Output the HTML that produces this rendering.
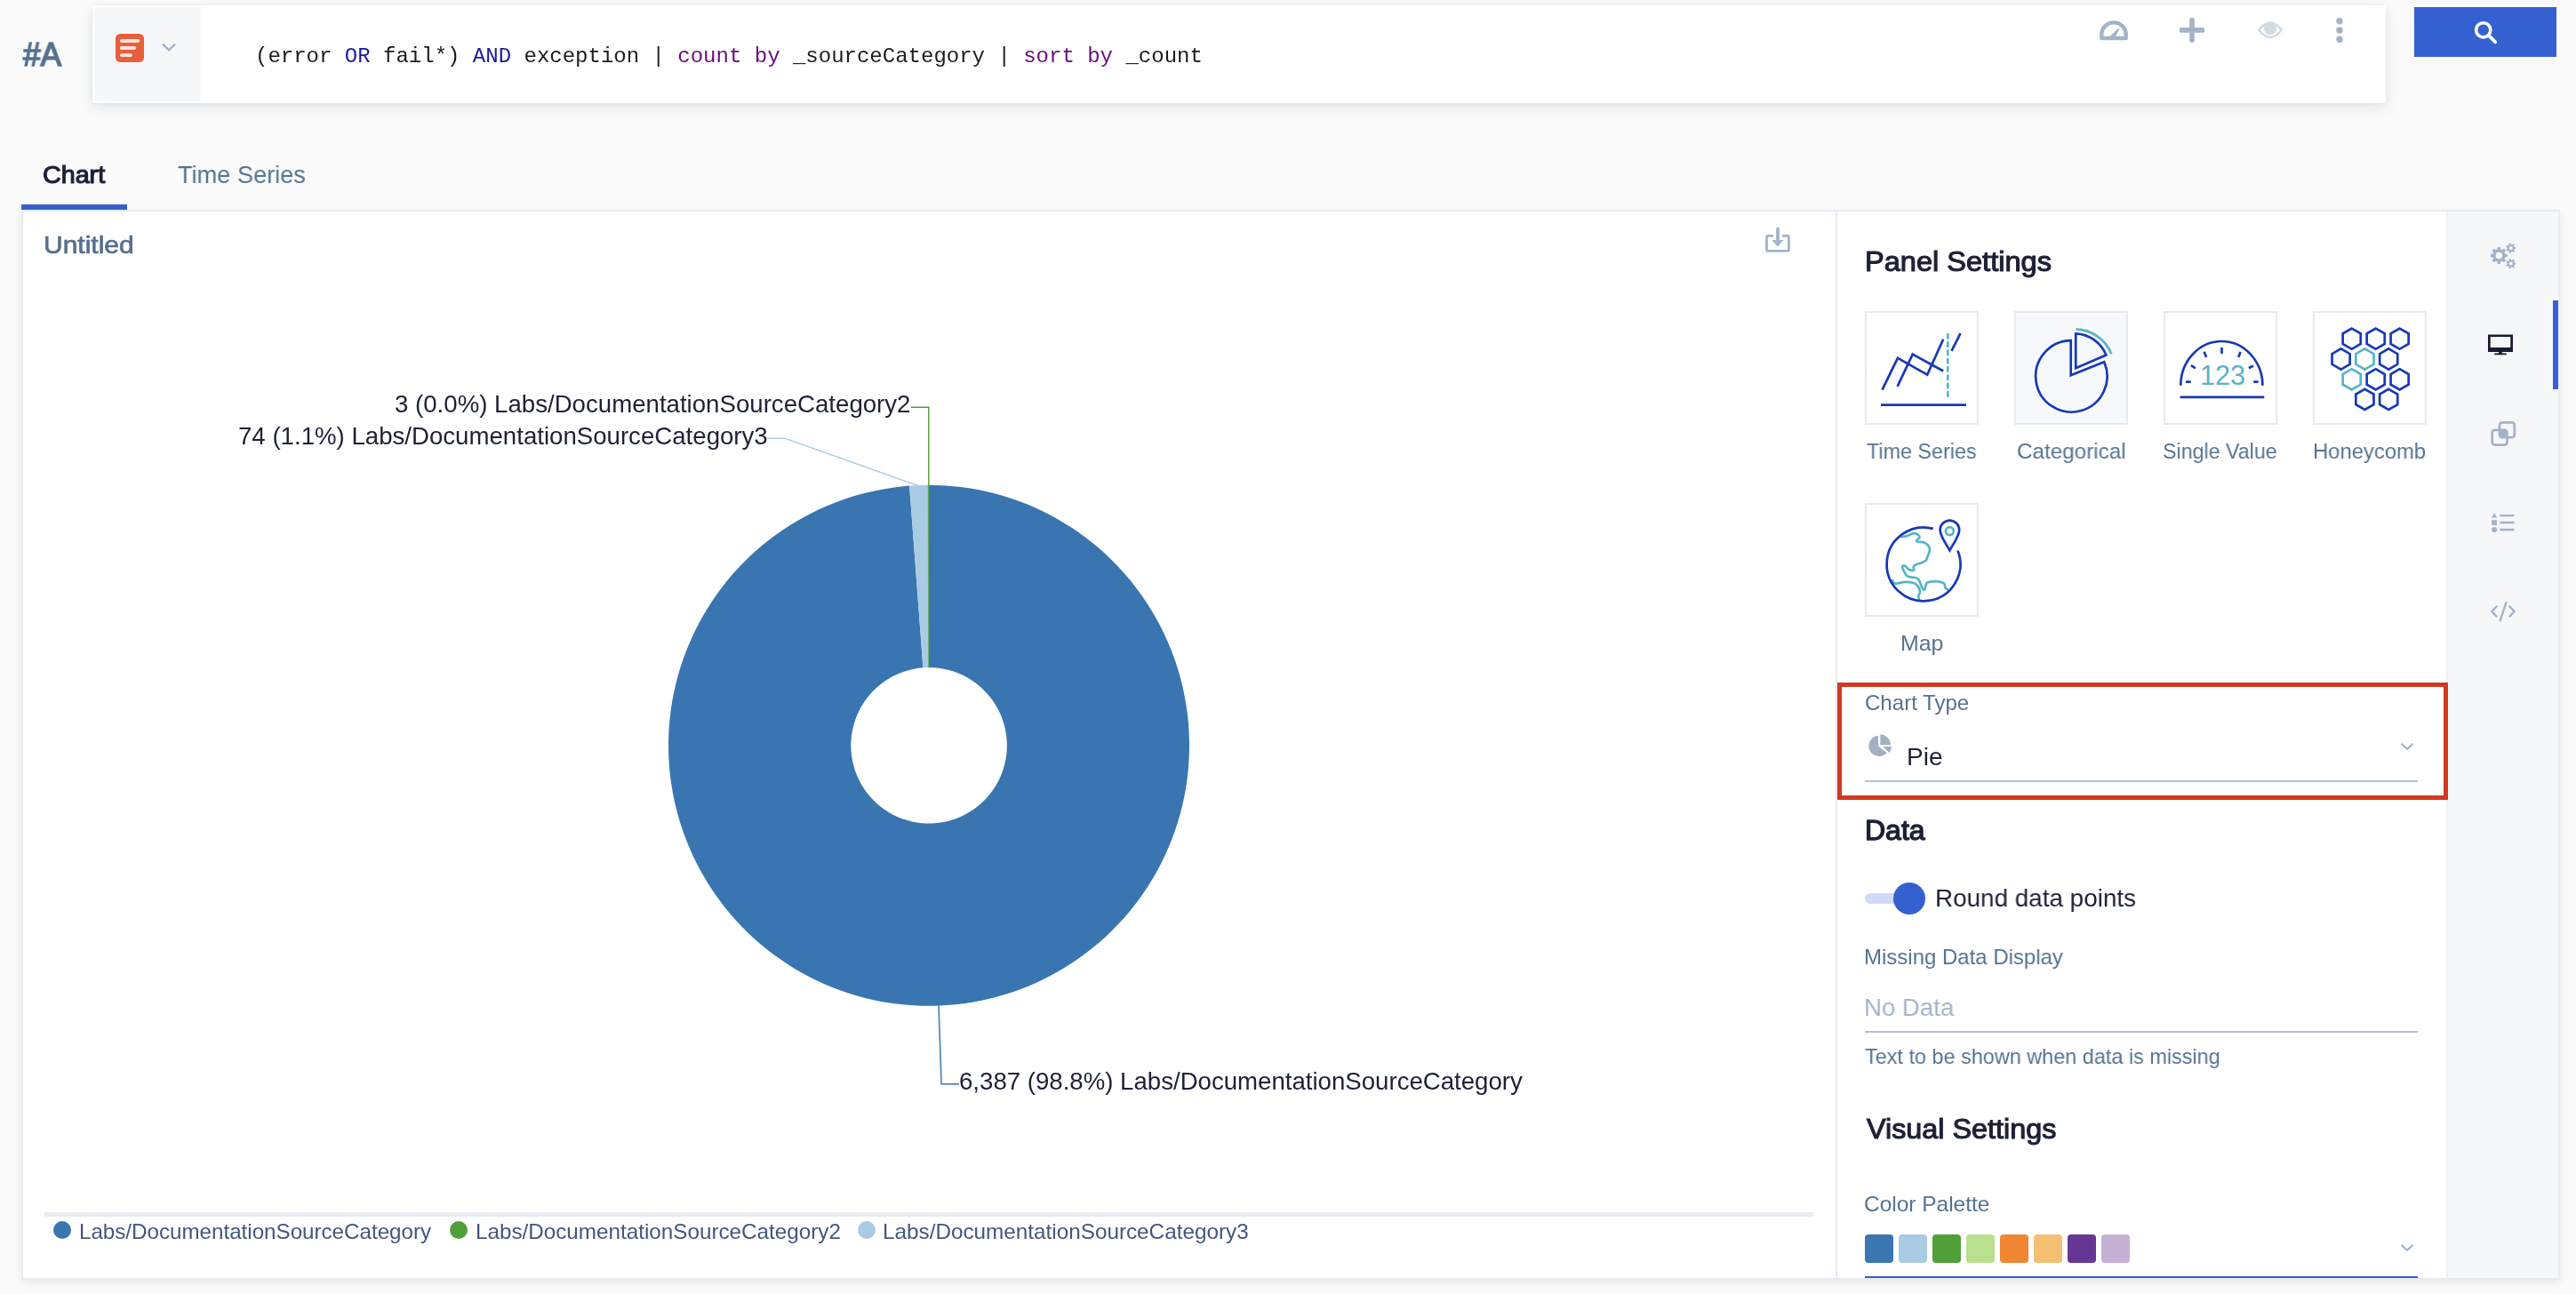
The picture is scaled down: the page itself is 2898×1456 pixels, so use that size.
<!DOCTYPE html>
<html lang="en">
<head>
<meta charset="utf-8">
<title>Panel Settings - Chart Type</title>
<style>
html,body{margin:0;padding:0}
body{width:2898px;height:1456px;overflow:hidden;background:#fafafa;position:relative;font-family:'Liberation Sans',sans-serif}
.abs{position:absolute}
.t{position:absolute;white-space:nowrap;transform-origin:0 0;display:block;will-change:transform}
#qbox{left:104px;top:6px;width:2580px;height:110px;background:#fff;box-shadow:0 5px 14px rgba(70,90,120,.13),0 0 3px rgba(70,90,120,.08)}
#qcell{left:106px;top:8px;width:120px;height:106px;background:#f6f7f9}
#query{will-change:transform;left:286.5px;top:47.6px;font:24px/32px 'Liberation Mono',monospace;color:#1b1b1d;white-space:pre}
#query .op{color:#1b1a9e}
#query .kw{color:#690a7c}
#sbtn{left:2716px;top:8px;width:160px;height:56px;background:#3561d0}
#tabline{left:24px;top:230px;width:119px;height:6px;background:#3561d0}
#panel{left:24px;top:236px;width:2856px;height:1204px;box-sizing:border-box;border:2px solid #e8ecf0;background:#fff;box-shadow:0 4px 9px rgba(60,70,90,.09)}
#ptop{display:none}
#settings{left:2065px;top:238px;width:688px;height:1200px;border-left:2px solid #e6eaef;box-sizing:border-box}
#side{left:2752px;top:238px;width:126px;height:1200px;background:#f6f7f9;border-left:2px solid #eef0f4;box-sizing:border-box}
#sidebar-active{left:2872px;top:338px;width:6px;height:100px;background:#3561d0}
.tile{position:absolute;width:128px;height:128px;box-sizing:border-box;border:2px solid #e6eaef;background:#fff}
.tile svg{position:absolute;left:-2px;top:-2px}
.uline{position:absolute;left:2098px;width:622px;height:2px;background:#b4c2d3}
.sw{position:absolute;top:1389px;width:32px;height:32px;border-radius:4px}
.dot{position:absolute;top:1374px;width:20px;height:20px;border-radius:50%}
#ovl{left:0;top:0;pointer-events:none}
</style>
</head>
<body>
<!-- header / query row -->
<div class="abs" id="qbox"></div>
<div class="abs" id="qcell"></div>
<div class="abs" id="query">(error <span class="op">OR</span> fail*) <span class="op">AND</span> exception | <span class="kw">count</span> <span class="kw">by</span> _sourceCategory | <span class="kw">sort</span> <span class="kw">by</span> _count</div>
<div class="abs" id="sbtn"></div>
<!-- tabs -->
<div class="abs" id="tabline"></div>
<!-- main panel -->
<div class="abs" id="panel"></div>
<div class="abs" id="ptop"></div>
<div class="abs" id="settings"></div>
<div class="abs" id="side"></div>
<div class="abs" id="sidebar-active"></div>

<!-- legend -->
<div class="abs" style="left:50px;top:1364px;width:1990px;height:5px;background:#e9edf1"></div>
<div class="dot" style="left:60px;background:#3976b1"></div>
<div class="dot" style="left:506px;background:#50a03a"></div>
<div class="dot" style="left:965px;background:#a9cbe3"></div>

<!-- viz type tiles -->
<div class="tile" style="left:2098px;top:350px">
<svg width="128" height="128" viewBox="0 0 128 128" fill="none" stroke="#1739b5" stroke-width="2.7">
<path d="M18,105.7H114"/>
<path d="M93.3,25V96.7" stroke="#56b5c6" stroke-dasharray="6.6 2.7"/>
<path d="M19.5,88.6L36.9,52.9L70.2,71.6L88.2,31.8"/>
<path d="M36.6,84.8L53.7,48.6L88.2,67.5"/>
<path d="M97.5,44.8L107.5,25.2"/>
</svg></div>
<div class="tile" style="left:2266px;top:350px;background:#f7f8fa">
<svg width="128" height="128" viewBox="0 0 128 128" fill="none" stroke="#1739b5" stroke-width="2.7">
<path d="M63.7,33.2V72.3L101.2,57.3A40.2,40.2 0 1 1 63.7,33.2Z" stroke-linejoin="miter"/>
<path d="M69.2,25.3V64.3L103.4,49.6A38.5,38.5 0 0 0 69.2,25.3Z"/>
<path d="M69.5,20.4A44.5,44.5 0 0 1 109.3,48.2" stroke="#56b5c6"/>
</svg></div>
<div class="tile" style="left:2434px;top:350px">
<svg width="128" height="128" viewBox="0 0 128 128" fill="none" stroke="#1739b5" stroke-width="2.7">
<path d="M18.6,96.9H113.3"/>
<path d="M19.3,83.8A46.05,49.8 0 0 1 111.4,83.8"/>
<path d="M65.5,41V48M45.6,45.7L48.1,51.9M86.6,46L84.1,51.9M30.9,61.2L35.9,64.3M100.9,61.5L95.9,64.3M25.1,79.6H30.7M101.2,79.6H106.7"/>
<text x="41" y="83.4" font-family="'Liberation Sans',sans-serif" font-size="31" fill="#56b5c6" stroke="none" textLength="51" lengthAdjust="spacingAndGlyphs">123</text>
</svg></div>
<div class="tile" style="left:2602px;top:350px">
<svg width="128" height="128" viewBox="0 0 128 128" fill="none" stroke-width="2.7"><polygon points="43.70,19.60 53.75,25.40 53.75,37.00 43.70,42.80 33.65,37.00 33.65,25.40" stroke="#1739b5"/><polygon points="70.70,19.60 80.75,25.40 80.75,37.00 70.70,42.80 60.65,37.00 60.65,25.40" stroke="#1739b5"/><polygon points="97.60,19.60 107.65,25.40 107.65,37.00 97.60,42.80 87.55,37.00 87.55,25.40" stroke="#1739b5"/><polygon points="31.60,42.40 41.65,48.20 41.65,59.80 31.60,65.60 21.55,59.80 21.55,48.20" stroke="#1739b5"/><polygon points="85.20,42.40 95.25,48.20 95.25,59.80 85.20,65.60 75.15,59.80 75.15,48.20" stroke="#1739b5"/><polygon points="70.70,65.20 80.75,71.00 80.75,82.60 70.70,88.40 60.65,82.60 60.65,71.00" stroke="#1739b5"/><polygon points="97.60,65.20 107.65,71.00 107.65,82.60 97.60,88.40 87.55,82.60 87.55,71.00" stroke="#1739b5"/><polygon points="58.40,87.80 68.45,93.60 68.45,105.20 58.40,111.00 48.35,105.20 48.35,93.60" stroke="#1739b5"/><polygon points="85.20,87.80 95.25,93.60 95.25,105.20 85.20,111.00 75.15,105.20 75.15,93.60" stroke="#1739b5"/><polygon points="58.40,42.40 68.45,48.20 68.45,59.80 58.40,65.60 48.35,59.80 48.35,48.20" stroke="#56b5c6"/><polygon points="43.70,65.20 53.75,71.00 53.75,82.60 43.70,88.40 33.65,82.60 33.65,71.00" stroke="#56b5c6"/></svg></div>
<div class="tile" style="left:2098px;top:566px">
<svg width="128" height="128" viewBox="0 0 128 128" fill="none" stroke="#1739b5" stroke-width="2.7" stroke-linecap="butt">
<path d="M40,37.9C44,38.5 47.5,37.3 51,35.5S58,33.5 60.9,36.8S56,41.5 58.6,43.1S63,43 66.1,44.3S72.5,48 73,51.8S70.5,58 69.6,62.8S60,67.5 56.2,69.8S56.5,75 55.1,75.6S52,75.8 49.9,75S46,70.2 44.1,70.4S41.5,71.5 42.3,73.3S45,80 47.5,82S52,83 55.1,83.7S58.5,84 60.3,86S64,96.5 66.1,97.6S68,90.5 70.1,89.5S79,88 82.3,88.3S88,89.5 89.3,90.7S89.5,94 90.4,95.3S92.5,97 93.9,97.6" stroke="#56b5c6"/>
<path d="M30.1,86C31.5,88.5 32.5,90.5 34.2,90.7S42,88.7 46.4,88.9S56,89.8 58,91.8S62,97.5 62,99.9S60.2,103 60.3,104.6S60.7,107.5 60.9,109.2" stroke="#56b5c6"/>
<path d="M76.8,28.9A41.4,41.4 0 1 0 104.4,53.4"/>
<path d="M95.4,53.3C91,45.5 84.6,36.5 84.6,30.4A10.8,10.8 0 0 1 106.2,30.4C106.2,36.5 99.8,45.5 95.4,53.3Z" stroke-linejoin="miter"/>
<circle cx="95.4" cy="31.6" r="4.5" stroke="#56b5c6"/>
</svg></div>

<!-- chart type row -->
<div class="uline" style="top:878px"></div>
<!-- toggle -->
<div class="abs" style="left:2098px;top:1005px;width:52px;height:12px;border-radius:6px;background:#cfdbf8"></div>
<div class="abs" style="left:2130px;top:993px;width:36px;height:36px;border-radius:50%;background:#3561d0"></div>
<div class="uline" style="top:1160px"></div>
<!-- palette -->
<div class="sw" style="left:2098px;background:#3a76b1"></div>
<div class="sw" style="left:2136px;background:#a9cbe3"></div>
<div class="sw" style="left:2174px;background:#50a03a"></div>
<div class="sw" style="left:2212px;background:#b9df8f"></div>
<div class="sw" style="left:2250px;background:#ee8632"></div>
<div class="sw" style="left:2288px;background:#f5c072"></div>
<div class="sw" style="left:2326px;background:#663795"></div>
<div class="sw" style="left:2364px;background:#c5b1d6"></div>
<div class="abs" style="left:2098px;top:1436px;width:622px;height:2px;background:#3561d0"></div>

<!-- all text -->
<span class="t" id="t_a" style="left:26.18px;top:44.00px;font-size:36px;line-height:36px;color:#557391;-webkit-text-stroke:1.6px #557391;transform:scaleX(0.9772)">#A</span>
<span class="t" id="t_tab1" style="left:47.88px;top:183.00px;font-size:28px;line-height:28px;color:#1d2135;-webkit-text-stroke:1.2px #1d2135;transform:scaleX(1.0244)">Chart</span>
<span class="t" id="t_tab2" style="left:199.76px;top:183.00px;font-size:28px;line-height:28px;color:#557391;transform:scaleX(0.9699)">Time Series</span>
<span class="t" id="t_title" style="left:49.08px;top:262.00px;font-size:28px;line-height:28px;color:#56708d;-webkit-text-stroke:0.7px #56708d;transform:scaleX(1.0705)">Untitled</span>
<span class="t" id="t_l1" style="left:444.17px;top:441.00px;font-size:27.6px;line-height:27.6px;color:#1d2135;transform:scaleX(1.0012)">3 (0.0%) Labs/DocumentationSourceCategory2</span>
<span class="t" id="t_l2" style="left:267.62px;top:477.00px;font-size:27.6px;line-height:27.6px;color:#1d2135;transform:scaleX(1.0010)">74 (1.1%) Labs/DocumentationSourceCategory3</span>
<span class="t" id="t_l3" style="left:1078.62px;top:1203.00px;font-size:27.6px;line-height:27.6px;color:#1d2135;transform:scaleX(1.0005)">6,387 (98.8%) Labs/DocumentationSourceCategory</span>
<span class="t" id="t_lg1" style="left:88.67px;top:1374.00px;font-size:24px;line-height:24px;color:#44567c;transform:scaleX(1.0063)">Labs/DocumentationSourceCategory</span>
<span class="t" id="t_lg2" style="left:534.76px;top:1374.00px;font-size:24px;line-height:24px;color:#44567c;transform:scaleX(1.0097)">Labs/DocumentationSourceCategory2</span>
<span class="t" id="t_lg3" style="left:993.06px;top:1374.00px;font-size:24px;line-height:24px;color:#44567c;transform:scaleX(1.0116)">Labs/DocumentationSourceCategory3</span>
<span class="t" id="t_ps" style="left:2097.87px;top:279.00px;font-size:31px;line-height:31px;color:#1d2135;-webkit-text-stroke:1.1px #1d2135;transform:scaleX(1.0501)">Panel Settings</span>
<span class="t" id="t_ts" style="left:2100.13px;top:496.00px;font-size:24.4px;line-height:24.4px;color:#557391;transform:scaleX(0.9560)">Time Series</span>
<span class="t" id="t_cat" style="left:2268.69px;top:496.00px;font-size:24.4px;line-height:24.4px;color:#557391;transform:scaleX(0.9935)">Categorical</span>
<span class="t" id="t_sv" style="left:2433.47px;top:496.00px;font-size:24.4px;line-height:24.4px;color:#557391;transform:scaleX(0.9524)">Single Value</span>
<span class="t" id="t_hc" style="left:2602.09px;top:496.00px;font-size:24.4px;line-height:24.4px;color:#557391;transform:scaleX(0.9767)">Honeycomb</span>
<span class="t" id="t_map" style="left:2137.51px;top:712.00px;font-size:24.4px;line-height:24.4px;color:#557391;transform:scaleX(1.0217)">Map</span>
<span class="t" id="t_ct" style="left:2097.60px;top:779.00px;font-size:24px;line-height:24px;color:#557391;transform:scaleX(1.0024)">Chart Type</span>
<span class="t" id="t_pie" style="left:2145.26px;top:838.00px;font-size:28px;line-height:28px;color:#1d2135;transform:scaleX(0.9996)">Pie</span>
<span class="t" id="t_data" style="left:2097.91px;top:919.00px;font-size:31px;line-height:31px;color:#1d2135;-webkit-text-stroke:1.3px #1d2135;transform:scaleX(1.0323)">Data</span>
<span class="t" id="t_round" style="left:2176.97px;top:997.00px;font-size:28px;line-height:28px;color:#1d2135;transform:scaleX(0.9942)">Round data points</span>
<span class="t" id="t_mdd" style="left:2097.18px;top:1065.00px;font-size:24px;line-height:24px;color:#557391;transform:scaleX(0.9989)">Missing Data Display</span>
<span class="t" id="t_nd" style="left:2097.09px;top:1120.00px;font-size:28px;line-height:28px;color:#a3b5ca;transform:scaleX(0.9852)">No Data</span>
<span class="t" id="t_help" style="left:2098.33px;top:1177.00px;font-size:24px;line-height:24px;color:#557391;transform:scaleX(0.9759)">Text to be shown when data is missing</span>
<span class="t" id="t_vs" style="left:2099.67px;top:1255.00px;font-size:31px;line-height:31px;color:#1d2135;-webkit-text-stroke:1.1px #1d2135;transform:scaleX(1.0432)">Visual Settings</span>
<span class="t" id="t_cp" style="left:2097.48px;top:1343.00px;font-size:24px;line-height:24px;color:#557391;transform:scaleX(1.0192)">Color Palette</span>

<!-- overlay svg: chart + icons in page coordinates -->
<svg class="abs" id="ovl" width="2898" height="1456" viewBox="0 0 2898 1456">
<path d="M1045.00,545.80A293,293 0 1 1 1023.09,546.62L1038.44,751.30A87.75,87.75 0 1 0 1045.00,751.05Z" fill="#3976b1"/>
<path d="M1023.09,546.62A293,293 0 0 1 1044.15,545.80L1044.74,751.05A87.75,87.75 0 0 0 1038.44,751.30Z" fill="#a9cbe3"/>
<path d="M1044.15,545.80A293,293 0 0 1 1045.00,545.80L1045.00,751.05A87.75,87.75 0 0 0 1044.74,751.05Z" fill="#50a03a" stroke="#50a03a" stroke-width="0.5"/>
<path d="M1024.8,458.2H1044.8V547" fill="none" stroke="#50a03a" stroke-width="1.4"/>
<path d="M863,493.2H883L1033,546.5" fill="none" stroke="#a9cbe3" stroke-width="1.4"/>
<path d="M1056,1131L1059.1,1219.8H1079" fill="none" stroke="#3976b1" stroke-width="1.5"/>
<!-- red highlight -->
<rect x="2069.5" y="770.5" width="682" height="127" fill="none" stroke="#d1391f" stroke-width="5"/>
<!-- orange log icon -->
<rect x="130" y="38" width="32" height="32" rx="5.5" fill="#e8603b"/>
<path d="M136.8,46H155.4M136.8,54H151.2M136.8,62.1H147" stroke="#fbe4dd" stroke-width="3.8" stroke-linecap="round" fill="none"/>
<path d="M183,49.6L190,56.4L197,49.6" stroke="#a3b3c8" stroke-width="2.2" fill="none"/>
<!-- query action icons -->
<g fill="none" stroke="#a3b3c8">
<path d="M2364.3,43V39A13.7,13.7 0 0 1 2391.7,39V43Z" stroke-width="4.4" stroke-linejoin="round"/>
<path d="M2374,41.5L2383.5,32.5L2379,41.5Z" fill="#a3b3c8" stroke-width="1.5" stroke-linejoin="round"/>
<path d="M2466,21.3V46.3M2453.3,33.9H2478.7" stroke-width="5.5" stroke-linecap="round" stroke="none"/><rect x="2452" y="31.1" width="28" height="5.6" rx="1.6" fill="#a3b3c8" stroke="none"/><rect x="2463.2" y="20" width="5.6" height="27.7" rx="1.6" fill="#a3b3c8" stroke="none"/>
</g>
<path d="M2541.3,33.7C2546.5,27 2550.2,25.5 2554,25.5S2561.5,27 2566.7,33.7C2561.5,40.4 2557.8,42 2554,42S2546.5,40.4 2541.3,33.7Z" fill="none" stroke="#d3dae4" stroke-width="2.4"/>
<circle cx="2554" cy="32.2" r="7" fill="#d3dae4"/>
<g fill="#a3b3c8"><circle cx="2632" cy="23.7" r="3.7"/><circle cx="2632" cy="34" r="3.7"/><circle cx="2632" cy="44.3" r="3.7"/></g>
<!-- search icon -->
<circle cx="2793.7" cy="33.8" r="8.1" fill="none" stroke="#fff" stroke-width="3.6"/>
<path d="M2799.8,39.9L2807.2,47.3" stroke="#fff" stroke-width="3.8" stroke-linecap="round"/>
<!-- download icon -->
<g fill="none" stroke="#a3b3c8" stroke-width="2.8">
<path d="M1995,265.4H1988.5A1,1 0 0 0 1987.5,266.4V281.4A1,1 0 0 0 1988.5,282.4H2011.4A1,1 0 0 0 2012.4,281.4V266.4A1,1 0 0 0 2011.4,265.4H2004.9"/>
<path d="M2000,257.5V271" stroke-width="3.8" stroke-linecap="round"/>
</g>
<path d="M1993.2,270.1H2006.6L1999.9,277.6Z" fill="#a3b3c8"/>
<!-- chart type pie icon -->
<g fill="#a3b0c4">
<path d="M2113,827.8A11.6,11.6 0 1 0 2122.6,847L2113,839.6Z"/>
<path d="M2115.3,826.6A11.6,11.6 0 0 1 2127,838.2H2115.3Z"/>
<path d="M2118,840H2127.9A11.6,11.6 0 0 1 2125.6,846.9Z"/>
</g>
<path d="M2701.4,836.7L2708,842.8L2714.6,836.7" stroke="#a3b3c8" stroke-width="2.2" fill="none"/>
<path d="M2701.4,1400.7L2708,1406.8L2714.6,1400.7" stroke="#a3b3c8" stroke-width="2.2" fill="none"/>
<!-- sidebar icons -->
<g fill="#a3b3c8" fill-rule="evenodd">
<path d="M2820.76,285.85L2820.76,289.15L2818.27,289.29L2817.50,291.17L2819.15,293.02L2816.82,295.35L2814.97,293.70L2813.09,294.47L2812.95,296.96L2809.65,296.96L2809.51,294.47L2807.63,293.70L2805.78,295.35L2803.45,293.02L2805.10,291.17L2804.33,289.29L2801.84,289.15L2801.84,285.85L2804.33,285.71L2805.10,283.83L2803.45,281.98L2805.78,279.65L2807.63,281.30L2809.51,280.53L2809.65,278.04L2812.95,278.04L2813.09,280.53L2814.97,281.30L2816.82,279.65L2819.15,281.98L2817.50,283.83L2818.27,285.71ZM2815.10,287.50A3.8,3.8 0 1 0 2807.50,287.50A3.8,3.8 0 1 0 2815.10,287.50Z"/><path d="M2830.19,278.10L2830.19,280.30L2828.54,280.33L2827.98,281.49L2828.98,282.81L2827.26,284.18L2826.21,282.91L2824.95,283.19L2824.55,284.80L2822.41,284.31L2822.74,282.69L2821.74,281.89L2820.23,282.57L2819.28,280.59L2820.75,279.84L2820.75,278.56L2819.28,277.81L2820.23,275.83L2821.74,276.51L2822.74,275.71L2822.41,274.09L2824.55,273.60L2824.95,275.21L2826.21,275.49L2827.26,274.22L2828.98,275.59L2827.98,276.91L2828.54,278.07ZM2826.70,279.20A2.0,2.0 0 1 0 2822.70,279.20A2.0,2.0 0 1 0 2826.70,279.20Z"/><path d="M2830.19,295.50L2830.19,297.70L2828.54,297.73L2827.98,298.89L2828.98,300.21L2827.26,301.58L2826.21,300.31L2824.95,300.59L2824.55,302.20L2822.41,301.71L2822.74,300.09L2821.74,299.29L2820.23,299.97L2819.28,297.99L2820.75,297.24L2820.75,295.96L2819.28,295.21L2820.23,293.23L2821.74,293.91L2822.74,293.11L2822.41,291.49L2824.55,291.00L2824.95,292.61L2826.21,292.89L2827.26,291.62L2828.98,292.99L2827.98,294.31L2828.54,295.47ZM2826.70,296.60A2.0,2.0 0 1 0 2822.70,296.60A2.0,2.0 0 1 0 2826.70,296.60Z"/>
</g>
<g>
<path d="M2799,376.4H2827V395.9H2799ZM2801.7,379.1V390.9H2824.3V379.1Z" fill="#161b30" fill-rule="evenodd"/>
<path d="M2811.5,395.9H2814.5L2815.5,397.6H2819.8V399.2H2806.2V397.6H2810.5Z" fill="#161b30"/>
</g>
<g fill="none" stroke="#a3b3c8" stroke-width="2.7">
<rect x="2803.7" y="483.8" width="16.8" height="16.8" rx="3"/>
<rect x="2812" y="475.4" width="16.8" height="16.8" rx="3"/>
</g>
<rect x="2812" y="483.8" width="8.5" height="8.4" rx="2" fill="#a3b3c8"/>
<g fill="#a3b3c8">
<path d="M2806.1,577L2809.1,582.6H2803.1Z"/>
<rect x="2803.2" y="585.2" width="5.8" height="5.8"/>
<circle cx="2806.1" cy="596" r="3"/>
</g>
<path d="M2812.4,580.1H2828.6M2812.4,588H2828.6M2812.4,596H2828.6" stroke="#a3b3c8" stroke-width="2.4" fill="none"/>
<path d="M2809.2,681.7L2803.4,688L2809.2,694.3M2819.7,677.2L2812.4,699.1M2822.8,681.7L2828.6,688L2822.8,694.3" stroke="#a3b3c8" stroke-width="2.4" fill="none"/>
</svg>
</body>
</html>
